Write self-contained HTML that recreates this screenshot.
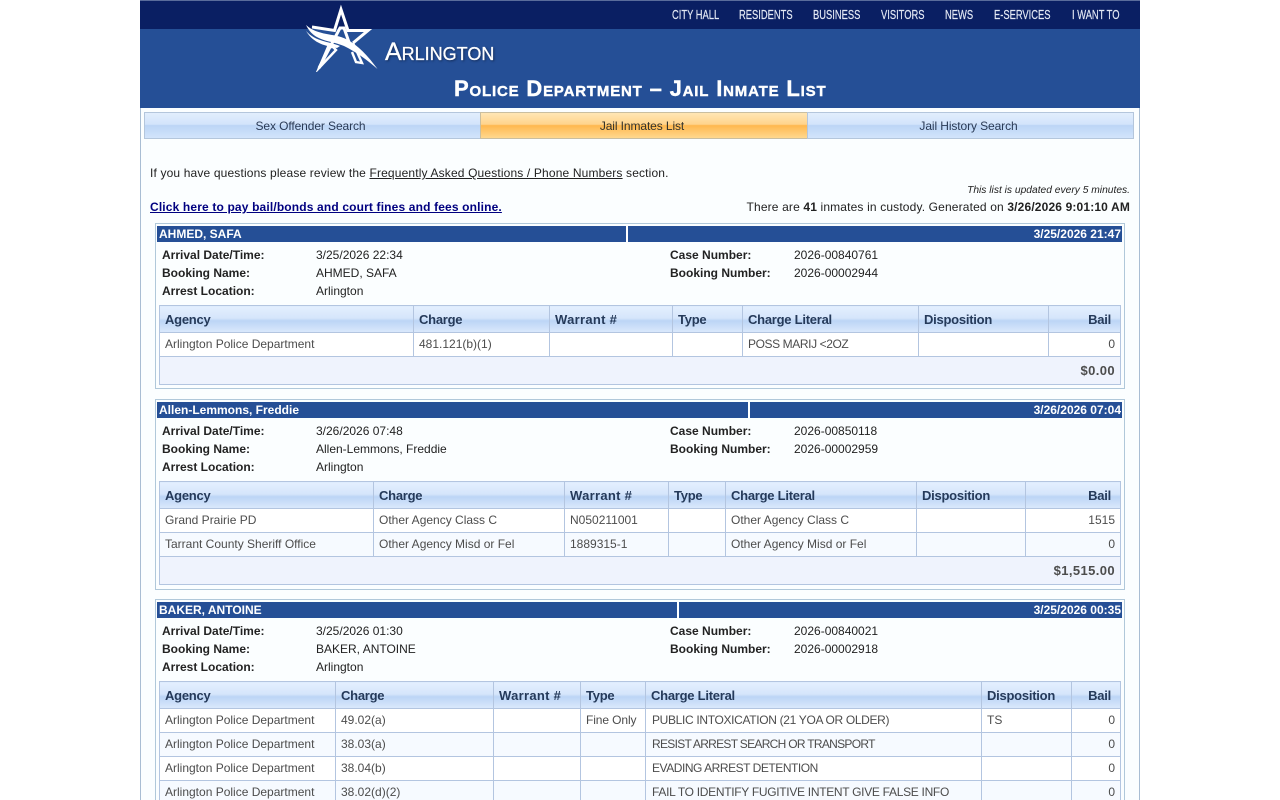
<!DOCTYPE html>
<html>
<head>
<meta charset="utf-8">
<title>Police Department – Jail Inmate List</title>
<style>
html,body{margin:0;padding:0;width:1280px;height:800px;overflow:hidden;background:#fff;font-family:"Liberation Sans",sans-serif;}
*{box-sizing:border-box}
#page{position:absolute;left:0;top:0;width:1280px;height:800px;overflow:hidden}
#wrap{position:absolute;left:140px;top:0;width:1000px;height:800px;background:#fbfeff;border-left:1px solid #a9bdd3;border-right:1px solid #a9bdd3;}
#head{position:absolute;left:140px;top:0;width:1000px;height:108px;background:#254f96}
#band{position:absolute;left:0;top:0;width:1000px;height:29px;background:#0a1f63;border-top:1px solid #5a6c9b}
.nav{position:absolute;top:7px;font:13px/16px "Liberation Sans",sans-serif;color:#e4e9f4;white-space:nowrap;transform-origin:0 0;transform:scaleX(.72);-webkit-text-stroke:.2px #e4e9f4}
#lt{position:absolute;left:245px;top:38px;color:#fff;font-size:25px;line-height:28px;font-variant:small-caps;text-shadow:1px 1px 2px #12274f;white-space:nowrap;letter-spacing:0;-webkit-text-stroke:.3px #fff}
#ttl{position:absolute;left:314px;top:75px;color:#fff;font:bold 22px/28px "Liberation Sans",sans-serif;font-variant:small-caps;white-space:nowrap;letter-spacing:.82px;-webkit-text-stroke:.4px #fff}
.tab{position:absolute;top:112px;height:27px;border:1px solid #b4c6dc;background:linear-gradient(#e2eefd 0,#d3e4fb 45%,#bcd5f6 50%,#d2e4fb 100%);text-align:center;font:12px/26px "Liberation Sans",sans-serif;color:#2a3a55;letter-spacing:-.1px;padding-right:4px}
.tab.on{background:linear-gradient(#ffe6b5 0,#ffd48c 45%,#ffb84e 50%,#ffd88e 100%);border-color:#c9bea0;color:#33322a}
.t{position:absolute;white-space:nowrap;font-size:12px;line-height:14px;color:#222}
.w{letter-spacing:.15px}
.panel{position:absolute;left:155px;width:970px;border:1px solid #b0c8da}
.bar{position:absolute;left:157px;width:965px;height:16px;background:#254f96;color:#fff;font:bold 12px/16px "Liberation Sans",sans-serif}
.bar b{position:absolute;left:2px}
.bar i{position:absolute;right:1px;font-style:normal;font-weight:bold}
.bar u{position:absolute;top:0;width:2px;height:16px;background:#fff}
.lab{font-weight:bold;color:#222}
table{position:absolute;left:159px;width:961px;border-collapse:collapse;table-layout:fixed;font-size:12px;color:#4c4c4c}
th,td{border:1px solid #b3c5e0;padding:0 5px;overflow:hidden;white-space:nowrap;text-align:left}
th{height:27px;font:bold 13px "Liberation Sans",sans-serif;color:#253a5a;background:linear-gradient(#e3effe 0,#d5e5fb 45%,#bcd5f6 55%,#dbe9fc 100%);letter-spacing:-.25px;padding-top:1px}
th.wn{letter-spacing:.3px}
td{height:24px;background:#fff;padding-bottom:1px}
tr.alt td{background:#f6faff}
td.f{height:28px;text-align:right;background:#eff3fd;font:bold 13px "Liberation Sans",sans-serif;color:#4c4c4c;letter-spacing:.4px}
tr.last td{height:19px;line-height:14px;padding-top:4px;padding-bottom:0;border-bottom:none;vertical-align:top}
.r{text-align:right}
th.r{padding-right:9px}
</style>
</head>
<body>
<div id="page">
<div id="wrap"></div>
<div id="head">
  <div id="band"></div>
  <div class="nav" style="left:532px">CITY HALL</div>
  <div class="nav" style="left:599px">RESIDENTS</div>
  <div class="nav" style="left:673px">BUSINESS</div>
  <div class="nav" style="left:741px">VISITORS</div>
  <div class="nav" style="left:805px">NEWS</div>
  <div class="nav" style="left:854px">E-SERVICES</div>
  <div class="nav" style="left:932px">I WANT TO</div>
  <svg style="position:absolute;left:160px;top:0" width="85" height="72" viewBox="0 0 85 72">
    <path d="M12 27 L34.5 30.5 L41 9.5 L48 30.5 L68 30.5 L53 43" fill="none" stroke="#fff" stroke-width="3" stroke-miterlimit="10"/>
    <path d="M6 25 C18 36 34 33 46 39 C58 45 68 56 77.5 69 C66 59 56 52 44 46 C30 40 14 42 6 25 Z" fill="#fff"/>
    <path d="M6 31 C16 42 28 41 40 46 L37 48 C26 46 14 44 6 31 Z" fill="#fff"/>
    <path d="M19 68 L40 28 L44 28 L50 45" fill="none" stroke="#fff" stroke-width="3" stroke-miterlimit="10"/>
    <path d="M19 68 L36 50 L33 47 L28 47 Z" fill="none" stroke="#fff" stroke-width="2.4" stroke-miterlimit="10"/>
    <path d="M53 43 L62 63 L56 62 L52 52" fill="none" stroke="#fff" stroke-width="2.4"/>
  </svg>
  <div id="lt">Arlington</div>
  <div id="ttl">Police Department – Jail Inmate List</div>
</div>

<div class="tab" style="left:144px;width:337px">Sex Offender Search</div>
<div class="tab on" style="left:480px;width:328px">Jail Inmates List</div>
<div class="tab" style="left:807px;width:327px">Jail History Search</div>

<div class="t w" style="left:150px;top:166px">If you have questions please review the <u>Frequently Asked Questions / Phone Numbers</u> section.</div>
<div class="t" style="right:150px;top:185px;font-size:10.25px;font-style:italic;line-height:12px">This list is updated every 5 minutes.</div>
<div class="t w" style="left:150px;top:200px;font-weight:bold;color:#000080"><u>Click here to pay bail/bonds and court fines and fees online.</u></div>
<div class="t w" style="right:150px;top:200px">There are <b>41</b> inmates in custody. Generated on <b>3/26/2026 9:01:10 AM</b></div>

<!-- 1 -->
<div class="panel" style="top:223px;height:166px"></div>
<div class="bar" style="top:226px"><b>AHMED, SAFA</b><u style="left:469px"></u><i>3/25/2026 21:47</i></div>
<div class="t lab" style="left:162px;top:248px">Arrival Date/Time:</div><div class="t" style="left:316px;top:248px">3/25/2026 22:34</div>
<div class="t lab" style="left:670px;top:248px">Case Number:</div><div class="t" style="left:794px;top:248px">2026-00840761</div>
<div class="t lab" style="left:162px;top:266px">Booking Name:</div><div class="t" style="left:316px;top:266px">AHMED, SAFA</div>
<div class="t lab" style="left:670px;top:266px">Booking Number:</div><div class="t" style="left:794px;top:266px">2026-00002944</div>
<div class="t lab" style="left:162px;top:284px">Arrest Location:</div><div class="t" style="left:316px;top:284px">Arlington</div>
<table style="top:305px">
<colgroup><col style="width:254px"><col style="width:136px"><col style="width:123px"><col style="width:70px"><col style="width:176px"><col style="width:130px"><col style="width:72px"></colgroup>
<tr><th>Agency</th><th>Charge</th><th class="wn">Warrant #</th><th>Type</th><th>Charge Literal</th><th>Disposition</th><th class="r">Bail</th></tr>
<tr><td>Arlington Police Department</td><td>481.121(b)(1)</td><td></td><td></td><td style="letter-spacing:-.4px">POSS MARIJ &lt;2OZ</td><td></td><td class="r">0</td></tr>
<tr><td class="f" colspan="7">$0.00</td></tr>
</table>

<!-- 2 -->
<div class="panel" style="top:399px;height:191px"></div>
<div class="bar" style="top:402px"><b>Allen-Lemmons, Freddie</b><u style="left:591px"></u><i>3/26/2026 07:04</i></div>
<div class="t lab" style="left:162px;top:424px">Arrival Date/Time:</div><div class="t" style="left:316px;top:424px">3/26/2026 07:48</div>
<div class="t lab" style="left:670px;top:424px">Case Number:</div><div class="t" style="left:794px;top:424px">2026-00850118</div>
<div class="t lab" style="left:162px;top:442px">Booking Name:</div><div class="t" style="left:316px;top:442px">Allen-Lemmons, Freddie</div>
<div class="t lab" style="left:670px;top:442px">Booking Number:</div><div class="t" style="left:794px;top:442px">2026-00002959</div>
<div class="t lab" style="left:162px;top:460px">Arrest Location:</div><div class="t" style="left:316px;top:460px">Arlington</div>
<table style="top:481px">
<colgroup><col style="width:214px"><col style="width:191px"><col style="width:104px"><col style="width:57px"><col style="width:191px"><col style="width:109px"><col style="width:95px"></colgroup>
<tr><th>Agency</th><th>Charge</th><th class="wn">Warrant #</th><th>Type</th><th>Charge Literal</th><th>Disposition</th><th class="r">Bail</th></tr>
<tr><td>Grand Prairie PD</td><td>Other Agency Class C</td><td>N050211001</td><td></td><td>Other Agency Class C</td><td></td><td class="r">1515</td></tr>
<tr class="alt"><td>Tarrant County Sheriff Office</td><td>Other Agency Misd or Fel</td><td>1889315-1</td><td></td><td>Other Agency Misd or Fel</td><td></td><td class="r">0</td></tr>
<tr><td class="f" colspan="7">$1,515.00</td></tr>
</table>

<!-- 3 -->
<div class="panel" style="top:599px;height:201px;border-bottom:none"></div>
<div class="bar" style="top:602px"><b>BAKER, ANTOINE</b><u style="left:520px"></u><i>3/25/2026 00:35</i></div>
<div class="t lab" style="left:162px;top:624px">Arrival Date/Time:</div><div class="t" style="left:316px;top:624px">3/25/2026 01:30</div>
<div class="t lab" style="left:670px;top:624px">Case Number:</div><div class="t" style="left:794px;top:624px">2026-00840021</div>
<div class="t lab" style="left:162px;top:642px">Booking Name:</div><div class="t" style="left:316px;top:642px">BAKER, ANTOINE</div>
<div class="t lab" style="left:670px;top:642px">Booking Number:</div><div class="t" style="left:794px;top:642px">2026-00002918</div>
<div class="t lab" style="left:162px;top:660px">Arrest Location:</div><div class="t" style="left:316px;top:660px">Arlington</div>
<table style="top:681px">
<colgroup><col style="width:176px"><col style="width:158px"><col style="width:87px"><col style="width:65px"><col style="width:336px"><col style="width:90px"><col style="width:49px"></colgroup>
<tr><th>Agency</th><th>Charge</th><th class="wn">Warrant #</th><th>Type</th><th>Charge Literal</th><th>Disposition</th><th class="r">Bail</th></tr>
<tr><td>Arlington Police Department</td><td>49.02(a)</td><td></td><td style="letter-spacing:-.1px">Fine Only</td><td style="letter-spacing:-.33px;padding-left:6px">PUBLIC INTOXICATION (21 YOA OR OLDER)</td><td>TS</td><td class="r">0</td></tr>
<tr class="alt"><td>Arlington Police Department</td><td>38.03(a)</td><td></td><td></td><td style="letter-spacing:-.7px;padding-left:6px">RESIST ARREST SEARCH OR TRANSPORT</td><td></td><td class="r">0</td></tr>
<tr><td>Arlington Police Department</td><td>38.04(b)</td><td></td><td></td><td style="letter-spacing:-.46px;padding-left:6px">EVADING ARREST DETENTION</td><td></td><td class="r">0</td></tr>
<tr class="alt last"><td>Arlington Police Department</td><td>38.02(d)(2)</td><td></td><td></td><td style="letter-spacing:-.3px;padding-left:6px">FAIL TO IDENTIFY FUGITIVE INTENT GIVE FALSE INFO</td><td></td><td class="r">0</td></tr>
</table>
</div>
</body>
</html>
